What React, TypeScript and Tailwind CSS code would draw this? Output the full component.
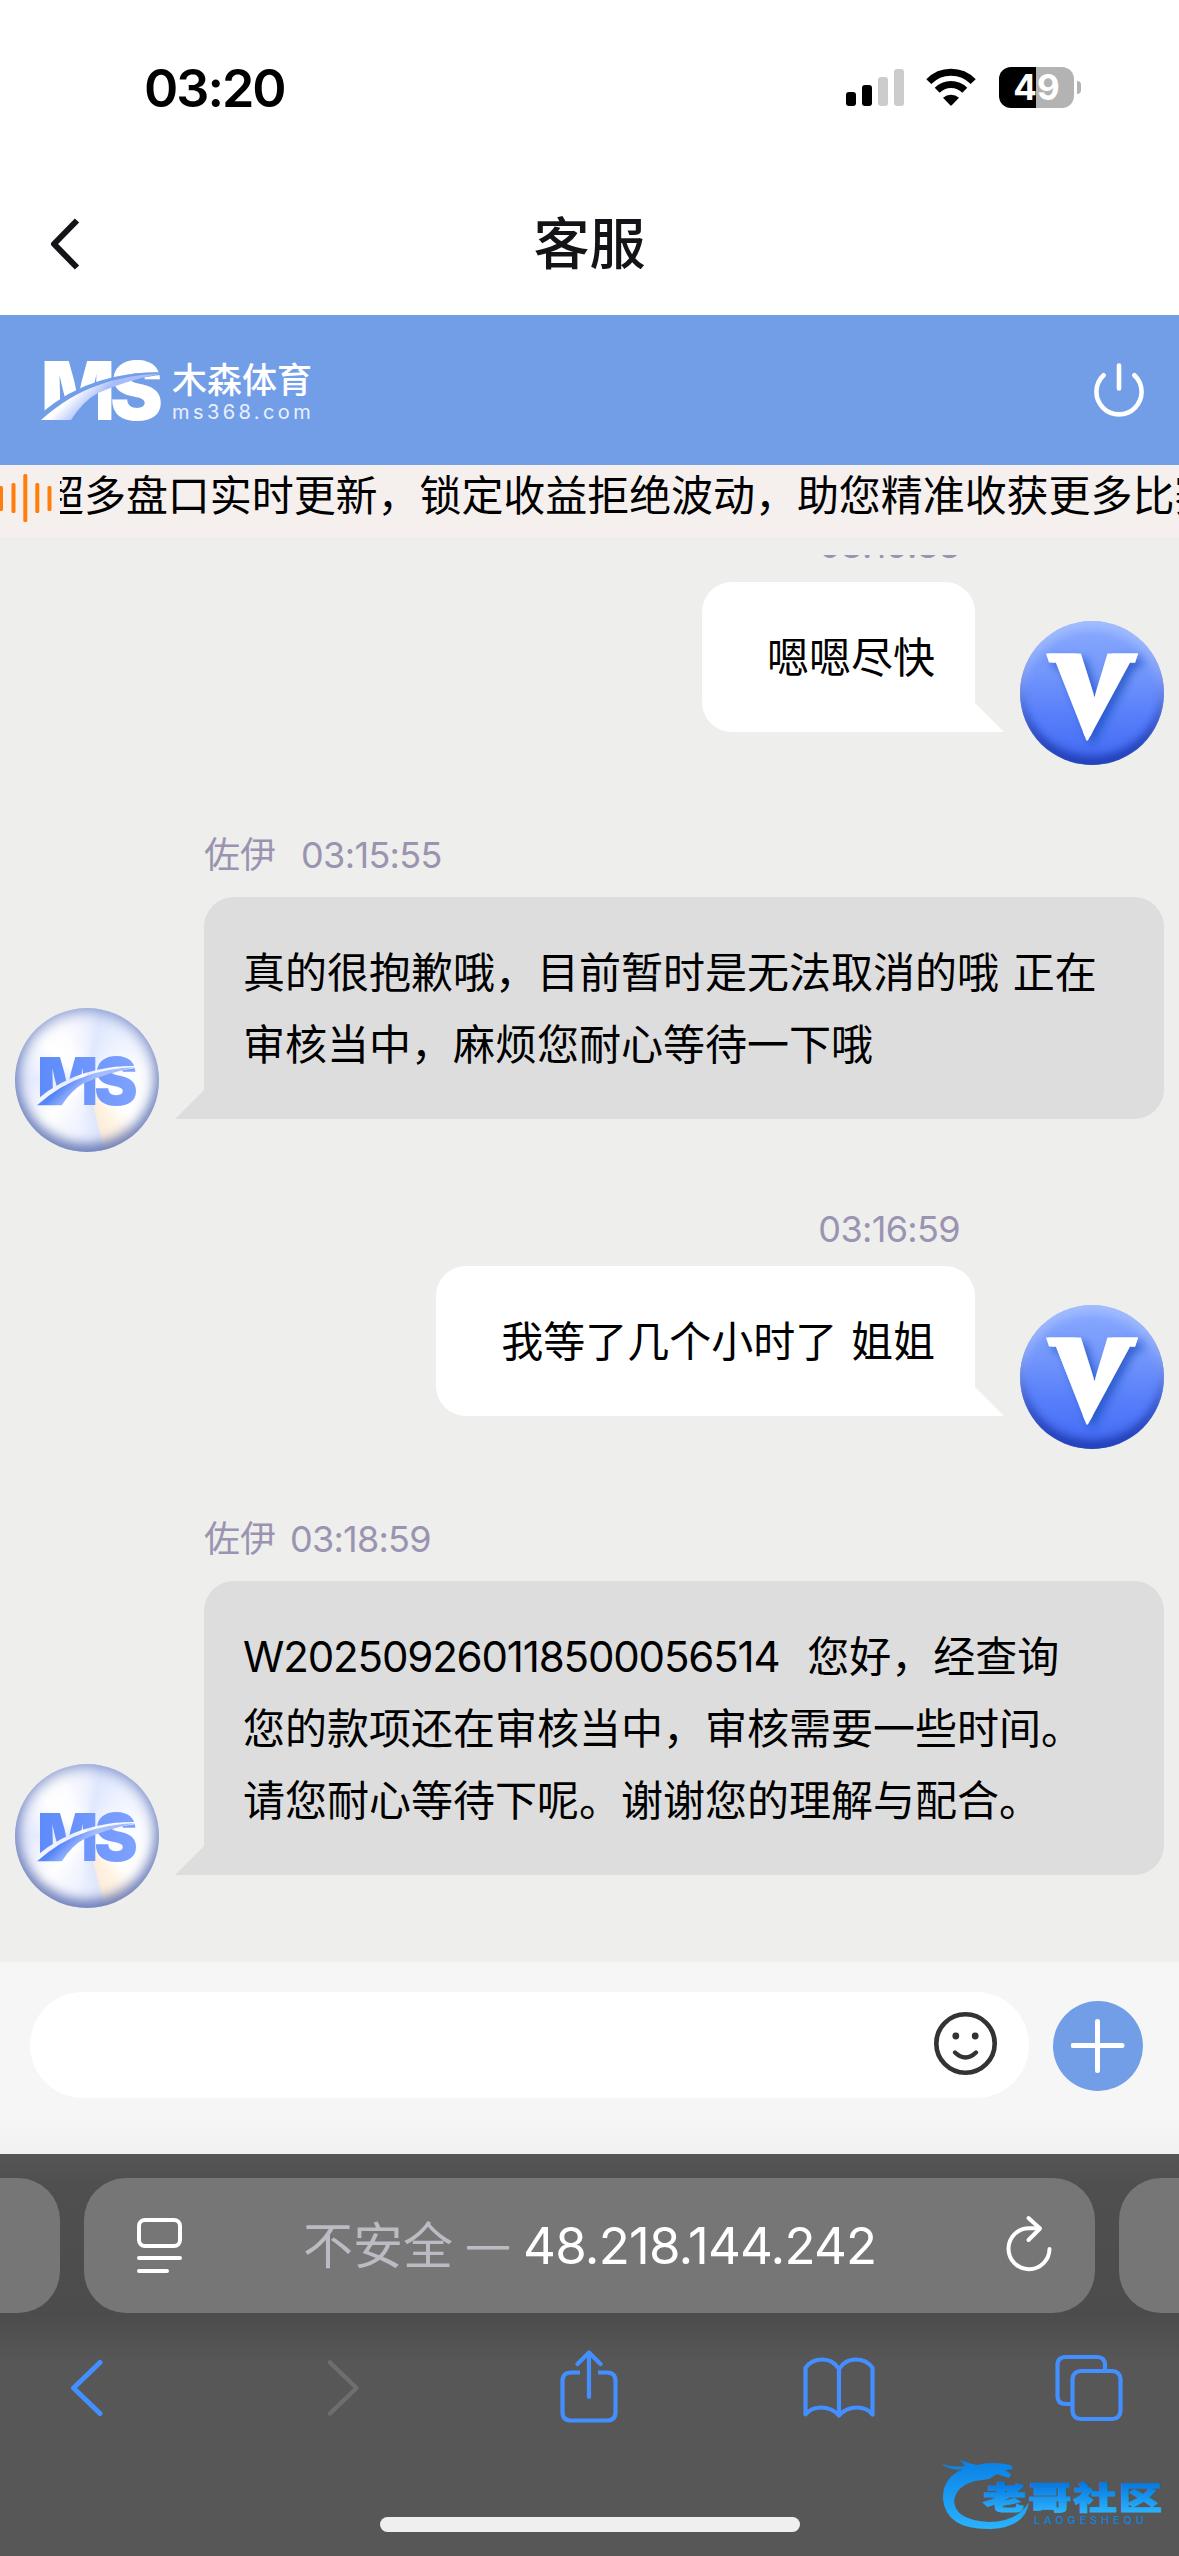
import type { ReactNode } from 'react';

type Sender = 'me' | 'agent';

interface Message {
    from: Sender;
    name?: string;
    time: string;
    lines: string[];
}

const messages: Message[] = [
    { from: 'me', time: '03:15:38', lines: ['嗯嗯尽快'] },
    {
        from: 'agent',
        name: '佐伊',
        time: '03:15:55',
        lines: ['真的很抱歉哦，目前暂时是无法取消的哦 正在', '审核当中，麻烦您耐心等待一下哦'],
    },
    { from: 'me', time: '03:16:59', lines: ['我等了几个小时了 姐姐'] },
    {
        from: 'agent',
        name: '佐伊',
        time: '03:18:59',
        lines: [
            'W202509260118500056514  您好，经查询',
            '您的款项还在审核当中，审核需要一些时间。',
            '请您耐心等待下呢。谢谢您的理解与配合。',
        ],
    },
];

const StatusBar: React.FC = () => (
    <div className="flex h-[177px] items-start justify-between pl-[144px] pr-[98px] pt-[60px]">
        <span className="text-[52px] font-semibold leading-[57px] tracking-[-2px] text-black">03:20</span>
        <div className="flex items-start pt-[7px]">
            <svg width="58" height="41" viewBox="0 0 58 41" className="mr-[22px]">
                <rect x="0" y="25" width="10" height="14" rx="3" fill="#000" />
                <rect x="16" y="18" width="10" height="21" rx="3" fill="#000" />
                <rect x="32" y="10" width="10" height="29" rx="3" fill="#ccc" />
                <rect x="48" y="2" width="10" height="37" rx="3" fill="#ccc" />
            </svg>
            <svg width="50" height="41" viewBox="0 0 50 41" className="mr-[23px]">
                <path d="M2.8 14.6 A31 31 0 0 1 47.2 14.6" fill="none" stroke="#000" strokeWidth="7" />
                <path d="M11.2 23.2 A19.5 19.5 0 0 1 38.8 23.2" fill="none" stroke="#000" strokeWidth="7" />
                <path d="M17 30.8 A11.8 11.8 0 0 1 33 30.8 L26 38 Q25 39 24 38 Z" fill="#000" />
            </svg>
            <div className="flex items-center">
                <div className="flex h-[41px] w-[75px] items-center justify-center rounded-[12px] bg-[linear-gradient(90deg,#000_50%,#b3b3b3_50%)]">
                    <span className="text-[35px] font-bold leading-none text-white">49</span>
                </div>
                <div className="ml-[3px] h-[13px] w-[4px] rounded-r-full bg-[#b3b3b3]" />
            </div>
        </div>
    </div>
);

const TitleBar: React.FC = () => (
    <div className="mb-[4px] grid h-[134px] grid-cols-3 items-center">
        <svg width="32" height="56" viewBox="0 0 32 56" className="ml-[49px]">
            <path d="M28 4.5 L5 28 L28 51.5" fill="none" stroke="#131318" strokeWidth="6" strokeLinejoin="round" />
        </svg>
        <h1 className="text-center text-[56px] font-medium leading-none text-[#131318]">客服</h1>
    </div>
);

interface BrandMarkProps {
    id: string;
    className: string;
    letters: [string, string];
    swoosh: [string, string];
}

const BrandMark: React.FC<BrandMarkProps> = ({ id, className, letters, swoosh }) => (
    <svg viewBox="0 0 122 62" className={className} preserveAspectRatio="none">
        <defs>
            <mask id={`${id}-cut`}>
                <rect width="122" height="62" fill="#fff" />
                <path d="M0 54 Q28 31 58 22 Q86 13 122 13 L122 15.5 Q84 20 57 32 L57 62 L0 62Z" fill="#000" />
            </mask>
            <linearGradient id={`${id}-ink`} x1="0" y1="0" x2="122" y2="0" gradientUnits="userSpaceOnUse">
                <stop offset="0" stopColor={letters[0]} />
                <stop offset="1" stopColor={letters[1]} />
            </linearGradient>
            <linearGradient id={`${id}-swoosh`} x1="14" y1="42" x2="34" y2="62" gradientUnits="userSpaceOnUse">
                <stop offset="0.3" stopColor={swoosh[0]} />
                <stop offset="1" stopColor={swoosh[1]} />
            </linearGradient>
        </defs>
        <g mask={`url(#${id}-cut)`} fill={`url(#${id}-ink)`} fontWeight="900" fontSize="81">
            <text x="0" y="61" textLength="74" lengthAdjust="spacingAndGlyphs">M</text>
            <text x="69" y="61" textLength="53" lengthAdjust="spacingAndGlyphs">S</text>
        </g>
        <path d="M0 61 Q28 36 58 26 Q84 16 120 14.5 Q84 22 57 34 Q42 42 30 61Z" fill={`url(#${id}-swoosh)`} />
    </svg>
);

const BrandBar: React.FC = () => (
    <header className="flex h-[150px] items-center justify-between bg-[#729ee8] pl-[41px] pr-[35px]">
        <div className="flex items-center">
            <BrandMark id="brand" className="h-[62px] w-[122px]" letters={['#fff', '#fff']} swoosh={['#fff', '#a9bdfb']} />
            <div className="ml-[9px] flex flex-col pt-[3px]">
                <span className="text-[35px] font-medium leading-[40px] text-white">木森体育</span>
                <span className="text-[20px] leading-[24px] tracking-[3.4px] text-white/85">ms368.com</span>
            </div>
        </div>
        <svg width="50" height="54" viewBox="0 0 50 54" fill="none" stroke="#fff" strokeWidth="4.6" strokeLinecap="round">
            <path d="M25 2.5 V25.5" />
            <path d="M9.6 12.2 A22.6 22.6 0 1 0 40.4 12.2" />
        </svg>
    </header>
);

const Notice: React.FC = () => (
    <div className="flex h-[72px] items-start overflow-hidden bg-[#f5f0ee]">
        <svg width="60" height="66" viewBox="0 0 60 66" className="shrink-0" fill="#ff7d0a">
            <rect x="-1" y="21" width="4" height="25" rx="1.5" />
            <rect x="11.5" y="18" width="4" height="30" rx="1.5" />
            <rect x="23.3" y="9" width="4" height="48" rx="1.5" />
            <rect x="35.3" y="18" width="4" height="30" rx="1.5" />
            <rect x="47.5" y="21" width="4" height="25" rx="1.5" />
        </svg>
        <div className="min-w-0 flex-1 overflow-hidden">
            <p className="-ml-[18px] whitespace-nowrap text-[42px] leading-[61px] tracking-[-0.06px] text-black">
                超多盘口实时更新，锁定收益拒绝波动，助您精准收获更多比赛
            </p>
        </div>
    </div>
);

const AgentAvatar: React.FC<{ id: string }> = ({ id }) => (
    <div className="flex size-[144px] shrink-0 items-center justify-center rounded-full bg-[conic-gradient(from_0deg,#eef2fd_0deg,#dfe8fd_12deg,#eef3ff_40deg,#fbfcff_80deg,#ffffff_130deg,#fff3e2_150deg,#fdeedb_164deg,#dfe6fc_168deg,#f0f3ff_190deg,#ffffff_225deg,#e6ebff_270deg,#ffffff_310deg,#fdfdff_335deg,#eef2fd_360deg)] shadow-[inset_0_0_14px_4px_rgba(95,120,190,0.65),inset_0_-7px_12px_rgba(65,80,150,0.6)]">
        <BrandMark
            id={id}
            className="h-[51px] w-[101px]"
            letters={['#5c8afa', '#7fa2ff']}
            swoosh={['#5585f8', '#a5bdfd']}
        />
    </div>
);

const UserAvatar: React.FC<{ id: string }> = ({ id }) => (
    <div className="size-[144px] shrink-0 rounded-full bg-[linear-gradient(180deg,#8aabff_0%,#7497fb_35%,#587ffa_65%,#4169f3_100%)] shadow-[inset_0_8px_10px_rgba(180,202,255,0.6),inset_0_-9px_9px_rgba(25,52,165,0.75)]">
        <svg viewBox="0 0 144 144" className="size-full">
            <defs>
                <clipPath id={`${id}-tip`}>
                    <path d="M26 32.5 H118 L115 41.5 H110 L67 121 L36 41.5 H29Z" />
                </clipPath>
                <filter id={`${id}-shade`} x="-20%" y="-20%" width="150%" height="150%">
                    <feDropShadow dx="5" dy="5" stdDeviation="4" floodColor="#1f50c0" floodOpacity="0.75" />
                </filter>
            </defs>
            <g filter={`url(#${id}-shade)`} fill="#fff">
                <g clipPath={`url(#${id}-tip)`}>
                    <text
                        x="26"
                        y="115"
                        fontSize="114"
                        fontWeight="900"
                        textLength="96"
                        lengthAdjust="spacingAndGlyphs"
                        stroke="#fff"
                        strokeWidth="9"
                    >
                        V
                    </text>
                </g>
            </g>
        </svg>
    </div>
);

const Bubble: React.FC<{ from: Sender; children: ReactNode }> = ({ from, children }) =>
    from === 'me' ? (
        <div className="relative rounded-[30px] rounded-br-none bg-white pb-[38px] pl-[65px] pr-[40px] pt-[40px]">
            {children}
            <span className="absolute bottom-0 -right-[29px] h-[30px] w-[30px] bg-white [clip-path:polygon(0_0,0_100%,100%_100%)]" />
        </div>
    ) : (
        <div className="relative w-[960px] rounded-[30px] rounded-bl-none bg-[#ddd] px-[39px] pb-[38px] pt-[40px]">
            {children}
            <span className="absolute bottom-0 -left-[29px] h-[30px] w-[30px] bg-[#ddd] [clip-path:polygon(100%_0,0_100%,100%_100%)]" />
        </div>
    );

// long order numbers are set a little tighter than the Chinese text around them
const renderLine = (line: string) =>
    line.split(/([A-Z]\d+)/).map((part, i) =>
        i % 2 === 1 ? (
            <span key={i} className="tracking-[-1.15px]">
                {part}
            </span>
        ) : (
            <span key={i} className="[word-spacing:2px]">{part}</span>
        ),
    );

const MessageRow: React.FC<{ message: Message; index: number }> = ({ message, index }) => {
    const { from, name, time, lines } = message;
    const body = lines.map((line) => (
        <p key={line} className="whitespace-pre text-[42px] leading-[72px] text-black">
            {renderLine(line)}
        </p>
    ));

    if (from === 'me') {
        return (
            <div className="mt-[53px] flex items-end justify-end pr-[15px]">
                <div className="mb-[33px] mr-[45px] flex flex-col items-end">
                    <div className="mb-[13px] pr-[15px] text-[36px] leading-[48px] tracking-[-0.65px] text-[#9a94b1]">{time}</div>
                    <Bubble from="me">{body}</Bubble>
                </div>
                <UserAvatar id={`user-${index}`} />
            </div>
        );
    }

    return (
        <div className="mt-[63px] flex items-end pl-[15px]">
            <AgentAvatar id={`agent-${index}`} />
            <div className="mb-[33px] ml-[45px]">
                <div className="mb-[15px] flex text-[36px] leading-[54px] text-[#9a94b1]">
                    <span>{name}</span>
                    <span className={index === 1 ? 'ml-[25px] tracking-[-0.65px]' : 'ml-[14px] tracking-[-0.75px]'}>{time}</span>
                </div>
                <Bubble from="agent">{body}</Bubble>
            </div>
        </div>
    );
};

const Composer: React.FC = () => (
    <div className="flex h-[192px] items-start bg-[linear-gradient(180deg,#f6f6f6_80%,#f1f1f1_100%)] pl-[30px] pt-[30px]">
        <div className="flex h-[106px] w-[999px] items-center justify-end rounded-full bg-white pb-[4px] pr-[32px]">
            <svg width="63" height="63" viewBox="0 0 63 63">
                <circle cx="31.5" cy="31.5" r="29.2" fill="none" stroke="#333" strokeWidth="4.6" />
                <circle cx="21.8" cy="24" r="3.4" fill="#333" />
                <circle cx="41.2" cy="24" r="3.4" fill="#333" />
                <path d="M21 40.5 Q31.5 50.5 42 40.5" fill="none" stroke="#333" strokeWidth="4.4" strokeLinecap="round" />
            </svg>
        </div>
        <button className="ml-[24px] mt-[9px] flex size-[90px] items-center justify-center rounded-full bg-[#729ee8]">
            <svg width="54" height="54" viewBox="0 0 54 54" stroke="#fff" strokeWidth="5" strokeLinecap="round">
                <path d="M26.5 2.5 V51.5 M2 26.5 H51" />
            </svg>
        </button>
    </div>
);

const Watermark: React.FC = () => (
    <svg width="226" height="84" viewBox="0 0 226 84" className="absolute bottom-[24px] right-[14px]">
        <defs>
            <linearGradient id="wm-text" x1="0" y1="35" x2="0" y2="64" gradientUnits="userSpaceOnUse">
                <stop offset="0" stopColor="#0478e2" />
                <stop offset="1" stopColor="#2bb2fb" />
            </linearGradient>
            <linearGradient id="wm-dragon" x1="0" y1="12" x2="0" y2="80" gradientUnits="userSpaceOnUse">
                <stop offset="0" stopColor="#0a80e6" />
                <stop offset="1" stopColor="#2ab2fc" />
            </linearGradient>
        </defs>
        <path
            d="M2 15 Q12 20 26 18 L21 12 Q32 16 38 17 Q52 13 72 17 L74 21 L66 22 L72 26 L70 30 L58 26 L50 31 L36 33 Q17 38 15 53 Q16 72 50 74 Q78 74 90 54 Q87 79 52 81 Q7 82 4 51 Q3 30 24 21 Q10 23 2 15Z"
            fill="url(#wm-dragon)"
        />
        <g transform="translate(44 0) scale(1.4 1)">
            <text
                x="0"
                y="61.5"
                fontSize="31"
                fontWeight="900"
                fill="url(#wm-text)"
                stroke="url(#wm-text)"
                strokeWidth="1"
                textLength="128"
                lengthAdjust="spacing"
            >
                老哥社区
            </text>
        </g>
        <text x="95" y="75.5" fontSize="11" fontWeight="500" fill="#1583dc" textLength="110" lengthAdjust="spacing">
            LAOGESHEQU
        </text>
    </svg>
);

const BrowserBar: React.FC = () => (
    <div className="relative flex flex-1 flex-col bg-[linear-gradient(180deg,#555_0%,#4f4f4f_8%,#4c4c4c_40%,#575757_52%,#575757_100%)]">
        <div className="mt-[24px] flex h-[135px] w-full gap-[24px] overflow-hidden">
            <div className="w-[60px] rounded-r-[42px] bg-[#767676]" />
            <div className="flex w-[1011px] items-center rounded-[42px] bg-[#767676] pl-[53px] pr-[43px]">
                <svg width="45" height="56" viewBox="0 0 45 56" fill="none" stroke="#fff" strokeWidth="4" strokeLinecap="round">
                    <rect x="2" y="2" width="41" height="26" rx="6" />
                    <path d="M2 40 H43 M2 53 H30" />
                </svg>
                <div className="flex flex-1 items-center pl-[121px] text-[50px] leading-none">
                    <span className="text-[#bcbac3]">不安全</span>
                    <span className="ml-[14px] inline-block w-[42px] text-[42px] text-[#bcbac3]">—</span>
                    <span className="ml-[14px] text-[51px] tracking-[-0.8px] text-white">48.218.144.242</span>
                </div>
                <svg width="46" height="58" viewBox="0 0 46 58" fill="none" stroke="#fff" strokeWidth="4" strokeLinecap="round" strokeLinejoin="round" className="mb-[5px]">
                    <path d="M43.5 35 A20.5 20.5 0 1 1 23 14.2 H33" />
                    <path d="M22.5 4 L34 14.5 L22.5 26" />
                </svg>
            </div>
            <div className="w-[60px] rounded-l-[42px] bg-[#767676]" />
        </div>
        <div className="mt-[36px] flex h-[78px] items-center pl-[68px]">
            <svg width="36" height="58" viewBox="0 0 36 58" fill="none" stroke="#448fff" strokeWidth="5" strokeLinecap="round" strokeLinejoin="round">
                <path d="M32 3.5 L5.5 29 L32 54.5" />
            </svg>
            <svg width="36" height="58" viewBox="0 0 36 58" fill="none" stroke="#6e6e6e" strokeWidth="4.5" strokeLinecap="round" strokeLinejoin="round" className="ml-[222px]">
                <path d="M4 3.5 L30.5 29 L4 54.5" />
            </svg>
            <svg width="58" height="74" viewBox="0 0 58 74" fill="none" stroke="#448fff" strokeWidth="4.2" strokeLinecap="round" strokeLinejoin="round" className="mb-[2px] ml-[198px]">
                <path d="M20 22.5 H11 Q2.5 22.5 2.5 31 V62 Q2.5 70.5 11 70.5 H47 Q55.5 70.5 55.5 62 V31 Q55.5 22.5 47 22.5 H38" strokeLinecap="butt" />
                <path d="M29 47 V3 M17.5 14 L29 2.5 L40.5 14" />
            </svg>
            <svg width="72" height="62" viewBox="0 0 72 62" fill="none" stroke="#448fff" strokeWidth="4.2" strokeLinecap="round" strokeLinejoin="round" className="ml-[185px]">
                <path d="M36 12 Q30 2.5 19.5 2.5 Q8 2.5 2.5 11 V57.5 Q8 50.5 18 50.5 Q29 50.5 36 58.5 Q43 50.5 54 50.5 Q64 50.5 69.5 57.5 V11 Q64 2.5 52.5 2.5 Q42 2.5 36 12 V58" />
            </svg>
            <svg width="70" height="68" viewBox="0 0 70 68" fill="none" stroke="#448fff" strokeWidth="4.2" className="ml-[180px]">
                <rect x="17.5" y="17" width="48" height="48" rx="8" />
                <path d="M50 16 V11 Q50 3 41.5 3 H11 Q2.5 3 2.5 11 V42 Q2.5 50 11 50 H16" />
            </svg>
        </div>
        <div className="mx-auto mb-[24px] mt-auto h-[15px] w-[420px] rounded-full bg-[#efefef]" />
        <Watermark />
    </div>
);

const App: React.FC = () => {
    return (
        <div className="flex h-[2556px] w-[1179px] flex-col overflow-hidden bg-white font-['Inter','Noto_Sans_CJK_SC',sans-serif]">
            <StatusBar />
            <TitleBar />
            <BrandBar />
            <Notice />
            <main className="flex h-[1425px] flex-col bg-[#eeeeec] pt-[18px]">
                <div className="flex min-h-0 flex-1 flex-col justify-end overflow-hidden pb-[54px]">
                    {messages.map((message, index) => (
                        <MessageRow key={message.time} message={message} index={index} />
                    ))}
                </div>
            </main>
            <Composer />
            <BrowserBar />
        </div>
    );
};

export default App;
